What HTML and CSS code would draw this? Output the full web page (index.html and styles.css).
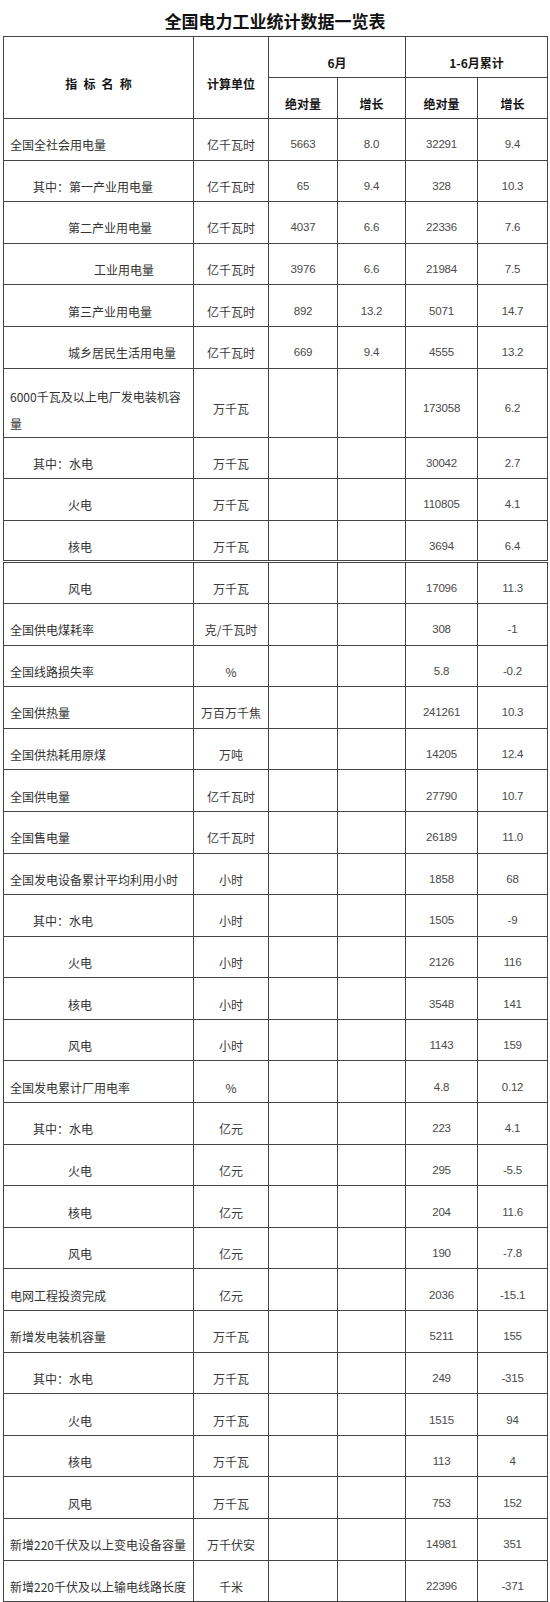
FILE: index.html
```html
<!DOCTYPE html>
<html lang="zh-CN">
<head>
<meta charset="utf-8">
<title>全国电力工业统计数据一览表</title>
<link rel="stylesheet" href="styles.css">
</head>
<body>
<h1 class="title">全国电力工业统计数据一览表</h1>
<table class="stats">
  <colgroup>
    <col class="c-name"><col class="c-unit"><col class="c-a"><col class="c-b"><col class="c-c"><col class="c-d">
  </colgroup>
  <thead>
    <tr class="hrow">
      <th rowspan="2" class="h-name">指 标 名 称</th>
      <th rowspan="2">计算单位</th>
      <th colspan="2">6月</th>
      <th colspan="2">1-6月累计</th>
    </tr>
    <tr class="hrow">
      <th>绝对量</th><th>增长</th><th>绝对量</th><th>增长</th>
    </tr>
  </thead>
  <tbody>
    <tr><td class="l0">全国全社会用电量</td><td>亿千瓦时</td><td class="n">5663</td><td class="n">8.0</td><td class="n">32291</td><td class="n">9.4</td></tr>
    <tr><td class="l1">其中：第一产业用电量</td><td>亿千瓦时</td><td class="n">65</td><td class="n">9.4</td><td class="n">328</td><td class="n">10.3</td></tr>
    <tr><td class="l2">第二产业用电量</td><td>亿千瓦时</td><td class="n">4037</td><td class="n">6.6</td><td class="n">22336</td><td class="n">7.6</td></tr>
    <tr><td class="l3">工业用电量</td><td>亿千瓦时</td><td class="n">3976</td><td class="n">6.6</td><td class="n">21984</td><td class="n">7.5</td></tr>
    <tr><td class="l2">第三产业用电量</td><td>亿千瓦时</td><td class="n">892</td><td class="n">13.2</td><td class="n">5071</td><td class="n">14.7</td></tr>
    <tr><td class="l2">城乡居民生活用电量</td><td>亿千瓦时</td><td class="n">669</td><td class="n">9.4</td><td class="n">4555</td><td class="n">13.2</td></tr>
    <tr class="tall"><td class="l0 wrap">6000千瓦及以上电厂发电装机容<br>量</td><td>万千瓦</td><td></td><td></td><td class="n">173058</td><td class="n">6.2</td></tr>
    <tr><td class="l1">其中：水电</td><td>万千瓦</td><td></td><td></td><td class="n">30042</td><td class="n">2.7</td></tr>
    <tr><td class="l2">火电</td><td>万千瓦</td><td></td><td></td><td class="n">110805</td><td class="n">4.1</td></tr>
    <tr><td class="l2">核电</td><td>万千瓦</td><td></td><td></td><td class="n">3694</td><td class="n">6.4</td></tr>
    <tr class="seam"><td class="l2">风电</td><td>万千瓦</td><td></td><td></td><td class="n">17096</td><td class="n">11.3</td></tr>
    <tr><td class="l0">全国供电煤耗率</td><td>克/千瓦时</td><td></td><td></td><td class="n">308</td><td class="n">-1</td></tr>
    <tr><td class="l0">全国线路损失率</td><td>%</td><td></td><td></td><td class="n">5.8</td><td class="n">-0.2</td></tr>
    <tr><td class="l0">全国供热量</td><td>万百万千焦</td><td></td><td></td><td class="n">241261</td><td class="n">10.3</td></tr>
    <tr><td class="l0">全国供热耗用原煤</td><td>万吨</td><td></td><td></td><td class="n">14205</td><td class="n">12.4</td></tr>
    <tr><td class="l0">全国供电量</td><td>亿千瓦时</td><td></td><td></td><td class="n">27790</td><td class="n">10.7</td></tr>
    <tr><td class="l0">全国售电量</td><td>亿千瓦时</td><td></td><td></td><td class="n">26189</td><td class="n">11.0</td></tr>
    <tr><td class="l0">全国发电设备累计平均利用小时</td><td>小时</td><td></td><td></td><td class="n">1858</td><td class="n">68</td></tr>
    <tr><td class="l1">其中：水电</td><td>小时</td><td></td><td></td><td class="n">1505</td><td class="n">-9</td></tr>
    <tr><td class="l2">火电</td><td>小时</td><td></td><td></td><td class="n">2126</td><td class="n">116</td></tr>
    <tr><td class="l2">核电</td><td>小时</td><td></td><td></td><td class="n">3548</td><td class="n">141</td></tr>
    <tr><td class="l2">风电</td><td>小时</td><td></td><td></td><td class="n">1143</td><td class="n">159</td></tr>
    <tr><td class="l0">全国发电累计厂用电率</td><td>%</td><td></td><td></td><td class="n">4.8</td><td class="n">0.12</td></tr>
    <tr><td class="l1">其中：水电</td><td>亿元</td><td></td><td></td><td class="n">223</td><td class="n">4.1</td></tr>
    <tr><td class="l2">火电</td><td>亿元</td><td></td><td></td><td class="n">295</td><td class="n">-5.5</td></tr>
    <tr><td class="l2">核电</td><td>亿元</td><td></td><td></td><td class="n">204</td><td class="n">11.6</td></tr>
    <tr><td class="l2">风电</td><td>亿元</td><td></td><td></td><td class="n">190</td><td class="n">-7.8</td></tr>
    <tr><td class="l0">电网工程投资完成</td><td>亿元</td><td></td><td></td><td class="n">2036</td><td class="n">-15.1</td></tr>
    <tr><td class="l0">新增发电装机容量</td><td>万千瓦</td><td></td><td></td><td class="n">5211</td><td class="n">155</td></tr>
    <tr><td class="l1">其中：水电</td><td>万千瓦</td><td></td><td></td><td class="n">249</td><td class="n">-315</td></tr>
    <tr><td class="l2">火电</td><td>万千瓦</td><td></td><td></td><td class="n">1515</td><td class="n">94</td></tr>
    <tr><td class="l2">核电</td><td>万千瓦</td><td></td><td></td><td class="n">113</td><td class="n">4</td></tr>
    <tr><td class="l2">风电</td><td>万千瓦</td><td></td><td></td><td class="n">753</td><td class="n">152</td></tr>
    <tr><td class="l0">新增220千伏及以上变电设备容量</td><td>万千伏安</td><td></td><td></td><td class="n">14981</td><td class="n">351</td></tr>
    <tr><td class="l0">新增220千伏及以上输电线路长度</td><td>千米</td><td></td><td></td><td class="n">22396</td><td class="n">-371</td></tr>
  </tbody>
</table>
</body>
</html>
```

FILE: styles.css
```css
html, body {
  margin: 0;
  padding: 0;
  background: #ffffff;
}

body {
  font-family: "Noto Sans CJK SC", "Noto Sans", sans-serif;
  color: #3a3a3a;
}

.title {
  margin: 0;
  height: 36px;
  box-sizing: border-box;
  padding-top: 6px;
  width: 550px;
  text-align: center;
  font-size: 17px;
  line-height: 30px;
  font-weight: 700;
  color: #111111;
}

.stats {
  margin-left: 3px;
  width: 544px;
  table-layout: fixed;
  border-collapse: collapse;
  font-size: 12px;
}

.c-name { width: 190px; }
.c-unit { width: 75px; }
.c-a { width: 69px; }
.c-b { width: 68px; }
.c-c { width: 72px; }
.c-d { width: 70px; }

.stats th,
.stats td {
  border: 1px solid #444444;
  padding: 11px 2px 0 2px;
  text-align: center;
  vertical-align: middle;
  line-height: 17px;
  white-space: nowrap;
}

.stats th {
  font-weight: 700;
  color: #151515;
}

.hrow {
  height: 41px;
}

.h-name {
  word-spacing: 3.5px;
}

.stats tbody tr {
  height: 41.6px;
}

.stats tbody tr.tall {
  height: 66px;
}

.stats tbody tr.seam td {
  border-top: 3px double #444444;
}

.stats td.l0,
.stats td.l1,
.stats td.l2,
.stats td.l3 {
  text-align: left;
  color: #333333;
}

.stats td.l0 { padding-left: 6px; }
.stats td.l1 { padding-left: 29px; }
.stats td.l2 { padding-left: 64px; }
.stats td.l3 { padding-left: 90px; }

.stats td.wrap {
  line-height: 27px;
  padding-top: 14px;
}

.stats td.n {
  font-family: "Liberation Sans", "Noto Sans CJK SC", sans-serif;
  font-size: 11.5px;
  letter-spacing: -0.2px;
  color: #4a4a4a;
}
```
